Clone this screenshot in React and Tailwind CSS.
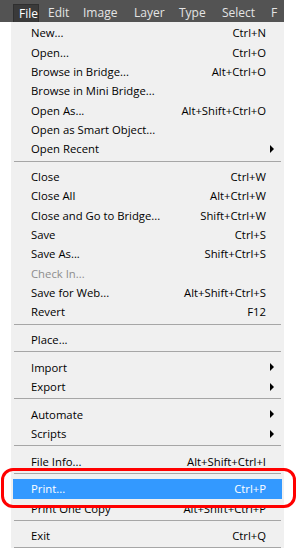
import React from 'react';

const barItems = [
  { label: 'Edit', w: 'w-[35px]' },
  { label: 'Image', w: 'w-[51px]' },
  { label: 'Layer', w: 'w-[45px]' },
  { label: 'Type', w: 'w-[43px]' },
  { label: 'Select', w: 'w-[49px]' },
  { label: 'F', w: 'w-[20px]' },
];

const menu = [
  { label: 'New...', key: 'Ctrl+N' },
  { label: 'Open...', key: 'Ctrl+O' },
  { label: 'Browse in Bridge...', key: 'Alt+Ctrl+O' },
  { label: 'Browse in Mini Bridge...' },
  { label: 'Open As...', key: 'Alt+Shift+Ctrl+O' },
  { label: 'Open as Smart Object...' },
  { label: 'Open Recent', sub: true },
  { sep: true },
  { label: 'Close', key: 'Ctrl+W' },
  { label: 'Close All', key: 'Alt+Ctrl+W' },
  { label: 'Close and Go to Bridge...', key: 'Shift+Ctrl+W' },
  { label: 'Save', key: 'Ctrl+S' },
  { label: 'Save As...', key: 'Shift+Ctrl+S' },
  { label: 'Check In...', disabled: true },
  { label: 'Save for Web...', key: 'Alt+Shift+Ctrl+S' },
  { label: 'Revert', key: 'F12' },
  { sep: true },
  { label: 'Place...' },
  { sep: true },
  { label: 'Import', sub: true },
  { label: 'Export', sub: true },
  { sep: true },
  { label: 'Automate', sub: true },
  { label: 'Scripts', sub: true },
  { sep: true },
  { label: 'File Info...', key: 'Alt+Shift+Ctrl+I' },
  { sep: true },
  { label: 'Print...', key: 'Ctrl+P', active: true },
  { label: 'Print One Copy', key: 'Alt+Shift+Ctrl+P' },
  { sep: true },
  { label: 'Exit', key: 'Ctrl+Q' },
];

function Arrow() {
  return (
    <svg width="5" height="8" viewBox="0 0 5 8" className="mr-[7px]">
      <path d="M0 0 L4 4 L0 8 Z" fill="#000" />
    </svg>
  );
}

function Row({ item }) {
  if (item.sep) {
    return (
      <div className="h-[8.33px] pt-[2px] px-[3px]">
        <div className="h-px bg-[#a6a6a6]" />
      </div>
    );
  }
  const color = item.active
    ? 'bg-[#3399ff] text-white'
    : item.disabled
    ? 'text-[#8d8d8d]'
    : 'text-black';
  return (
    <div className={`mx-[2px] h-[19.33px] flex items-center pl-[18px] ${color}`}>
      <span className="flex-1 whitespace-nowrap">{item.label}</span>
      {item.key && <span className="pr-[16px] whitespace-nowrap">{item.key}</span>}
      {item.sub && <Arrow />}
    </div>
  );
}

export default function App() {
  return (
    <div
      className="relative w-[297px] h-[548px] bg-white overflow-hidden text-[11.3px] leading-none"
      style={{ fontFamily: '"Open Sans", "Noto Sans", sans-serif' }}
    >
      {/* Menu bar */}
      <div className="h-[22px] w-[284px] bg-[#535353] flex pt-[4px] text-[12px] text-[#e4e4e4] overflow-hidden">
        <div className="ml-[13px] w-[32px] h-[18px] pl-[5px] flex items-center bg-[#3a3a3a] border-x border-t border-[#2f2f2f] text-white">
          File
        </div>
        <div className="w-[9px] shrink-0" />
        {barItems.map((b) => (
          <div key={b.label} className={`${b.w} shrink-0 h-[18px] flex items-center`}>
            {b.label}
          </div>
        ))}
      </div>

      {/* Dropdown */}
      <div className="ml-[11px] w-[273px] bg-[#f0f0f0] pt-[1.33px]">
        {menu.map((item, i) => (
          <Row key={i} item={item} />
        ))}
        <div className="pt-[1.5px] px-[3px]">
          <div className="h-px bg-[#a6a6a6]" />
        </div>
      </div>

      {/* Red highlight outline */}
      <div className="absolute left-[1px] top-[468px] w-[295px] h-[40px] border-[3px] border-[#ff0000] rounded-[12px] pointer-events-none" />
    </div>
  );
}
